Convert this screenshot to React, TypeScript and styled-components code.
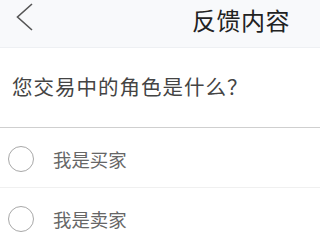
import React from 'react'
import styled, { createGlobalStyle } from 'styled-components'

const GlobalStyle = createGlobalStyle`
  html, body {
    margin: 0;
    padding: 0;
    background: #ffffff;
  }
  body {
    font-family: "Noto Sans CJK SC", "Noto Sans", sans-serif;
  }
`

const Page = styled.div`
  width: 320px;
  height: 240px;
  overflow: hidden;
  background: #fff;
`

const Header = styled.header`
  height: 47px;
  display: flex;
  align-items: center;
  justify-content: space-between;
  padding: 0 30px 0 16px;
  background: #f8f9fb;
  border-bottom: 1px solid #eef0f3;
`

const BackButton = styled.button`
  width: 17px;
  height: 28px;
  padding: 0;
  border: none;
  background: none;
  display: flex;
  margin-top: -13px;
`

const Title = styled.h1`
  margin: -7px 0 0;
  font-size: 24px;
  line-height: 28px;
  font-weight: 400;
  color: #222;
  letter-spacing: 0.5px;
`

const Question = styled.div`
  padding: 26px 12px 29px;
  font-size: 20.5px;
  line-height: 24px;
  letter-spacing: 1px;
  color: #444;
  border-bottom: 1.5px solid #cfcfcf;
`

const Option = styled.label<{ last?: boolean }>`
  height: 57px;
  padding-top: 2px;
  display: flex;
  align-items: center;
  gap: 19px;
  padding-left: 8px;
  border-bottom: ${p => (p.last ? 'none' : '1px solid #f0f0f0')};
  cursor: pointer;
`

const Radio = styled.span`
  width: 24px;
  height: 24px;
  border-radius: 50%;
  border: 1.5px solid #a8a8a8;
  flex-shrink: 0;
`

const OptionText = styled.span`
  font-size: 18.4px;
  line-height: 22px;
  color: #666;
`

const options = ['我是买家', '我是卖家']

export default function App() {
  return (
    <Page>
      <GlobalStyle />
      <Header>
        <BackButton aria-label="back">
          <svg width="17" height="28" viewBox="0 0 17 28" fill="none">
            <path d="M16 1 L1.5 14 L16 27" stroke="#555" strokeWidth="1.6" />
          </svg>
        </BackButton>
        <Title>反馈内容</Title>
      </Header>
      <Question>您交易中的角色是什么？</Question>
      {options.map((o, i) => (
        <Option key={o} last={i === options.length - 1}>
          <Radio />
          <OptionText>{o}</OptionText>
        </Option>
      ))}
    </Page>
  )
}
